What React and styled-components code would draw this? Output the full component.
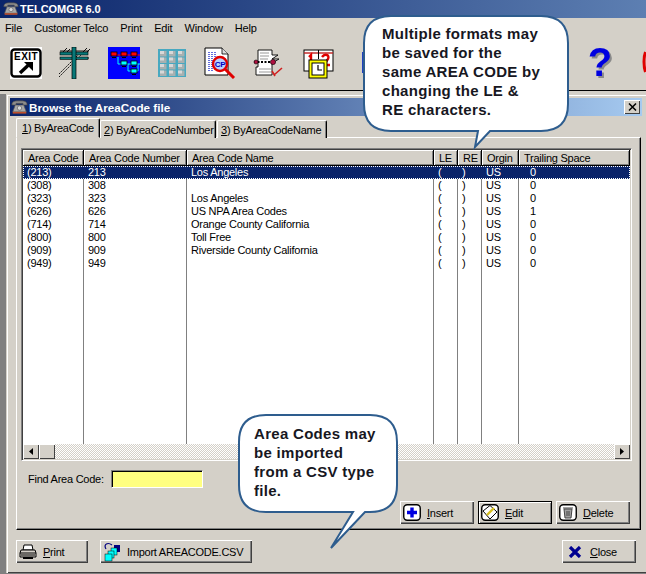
import React from 'react';
import styled, { createGlobalStyle } from 'styled-components';

const GlobalStyle = createGlobalStyle`
  html, body {
    margin: 0;
    padding: 0;
    background: #808080;
  }
`;

const FACE = '#d4d0c8';
const NAVY = '#0a246a';
const COLUMNS = '61px 103px 247px 24px 24px 37px 1fr';

const Screen = styled.div`
  position: relative;
  width: 646px;
  height: 574px;
  overflow: hidden;
  display: flex;
  flex-direction: column;
  background: ${FACE};
  font-family: 'Liberation Sans', Arial, sans-serif;
  font-size: 11px;
  letter-spacing: -0.25px;
  color: #000;
`;

const AppTitle = styled.div`
  height: 18px;
  display: flex;
  align-items: center;
  gap: 1px;
  padding-left: 3px;
  background: linear-gradient(90deg, ${NAVY}, #5d7fb2);
  color: #fff;
  font-weight: bold;
  font-size: 11px;
  letter-spacing: -0.05px;
`;

const MenuBar = styled.div`
  height: 20px;
  display: flex;
  align-items: center;
  gap: 12px;
  padding-left: 5px;
  letter-spacing: -0.15px;
`;

const Toolbar = styled.div`
  height: 53px;
  display: flex;
  align-items: flex-start;
  padding: 9px 0 0 10px;
  box-sizing: border-box;
  border-bottom: 1px solid #000;
  overflow: hidden;
`;

const ToolIcon = styled.svg`
  flex: none;
  width: 32px;
  height: 32px;
  margin-right: ${({ $gap }) => $gap}px;
`;

const HelpMark = styled.text`
  font-family: 'Liberation Sans', Arial, sans-serif;
  font-weight: bold;
  font-size: 40px;
  letter-spacing: 0;
  fill: #0000e0;
  filter: drop-shadow(2px 2px 0 #8a8a8a);
`;

const MdiArea = styled.div`
  flex: 1;
  margin-top: 3px;
  padding: 0 0 1px 6px;
  display: flex;
  background: #808080;
`;

const Window = styled.div`
  flex: 1;
  padding: 4px 4px 0;
  display: flex;
  flex-direction: column;
  background: ${FACE};
  box-shadow: inset 1px 1px ${FACE}, inset 2px 2px #fff, inset 0 -1px #404040;
`;

const WindowTitle = styled.div`
  height: 18px;
  flex: none;
  display: flex;
  align-items: center;
  gap: 1px;
  padding: 0 2px 0 1px;
  background: linear-gradient(90deg, ${NAVY}, #a6caf0);
  color: #fff;
  font-weight: bold;
  font-size: 11.7px;
  letter-spacing: 0;
`;

const CloseBox = styled.button`
  margin-left: auto;
  width: 16px;
  height: 14px;
  padding: 0;
  border: 0;
  display: flex;
  align-items: center;
  justify-content: center;
  background: ${FACE};
  box-shadow: inset 1px 1px #fff, inset -1px -1px #404040;
`;

const Content = styled.div`
  flex: 1;
  display: flex;
  flex-direction: column;
  padding: 2px 1px 0 6px;
`;

const TabRow = styled.div`
  height: 20px;
  display: flex;
  align-items: flex-end;
  position: relative;
  z-index: 1;
  margin-bottom: -1px;
`;

const Tab = styled.div`
  box-sizing: border-box;
  width: ${({ $width }) => $width}px;
  height: ${({ $active }) => ($active ? 20 : 18)}px;
  margin-right: ${({ $active }) => ($active ? 0 : 1)}px;
  padding: ${({ $active }) => ($active ? '3px 0 0 5px' : '3px 0 0 3px')};
  background: ${FACE};
  border: 1px solid #fff;
  border-right-color: #000;
  border-bottom: ${({ $active }) => ($active ? `1px solid ${FACE}` : '0')};
  border-radius: 2px 2px 0 0;
  box-shadow: inset -1px 0 #808080;
  white-space: nowrap;
`;

const TabPanel = styled.div`
  box-sizing: border-box;
  height: 393px;
  padding: 10px 8px 0 4px;
  display: flex;
  flex-direction: column;
  border: 1px solid #fff;
  border-right-color: #000;
  border-bottom-color: #000;
  box-shadow: inset -1px -1px #808080;
`;

const GridFrame = styled.div`
  box-sizing: border-box;
  height: 313px;
  padding: 1px;
  display: flex;
  flex-direction: column;
  border: 1px solid;
  border-color: #808080 #fff #fff #808080;
  box-shadow: inset 1px 1px #404040, inset -1px -1px ${FACE};
`;

const HeaderRow = styled.div`
  display: grid;
  grid-template-columns: ${COLUMNS};
  height: 16px;
  flex: none;
`;

const HeaderCell = styled.div`
  box-sizing: border-box;
  padding: 2px 0 0 5px;
  background: ${FACE};
  border-right: 1px solid #000;
  border-bottom: 1px solid #000;
  box-shadow: inset 1px 1px #fff, inset -1px -1px #808080;
  white-space: nowrap;
`;

const GridBody = styled.div`
  flex: 1;
  min-height: 0;
  background-color: #fff;
  background-image: linear-gradient(#808080, #808080), linear-gradient(#808080, #808080),
    linear-gradient(#808080, #808080), linear-gradient(#808080, #808080),
    linear-gradient(#808080, #808080), linear-gradient(#808080, #808080);
  background-size: 1px 100%;
  background-repeat: no-repeat;
  background-position: 60px 0, 163px 0, 410px 0, 434px 0, 458px 0, 495px 0;
`;

const Row = styled.div`
  display: grid;
  grid-template-columns: ${COLUMNS};
  height: 13px;
  line-height: 13px;
  background: ${({ $selected }) => ($selected ? NAVY : 'transparent')};
  color: ${({ $selected }) => ($selected ? '#fff' : '#000')};
  outline: ${({ $selected }) => ($selected ? '1px dotted #fff' : 'none')};
  outline-offset: -1px;
`;

const Cell = styled.div`
  padding-left: ${({ $indent }) => $indent || 4}px;
  white-space: nowrap;
  overflow: hidden;
`;

const ScrollBar = styled.div`
  height: 15px;
  flex: none;
  display: flex;
  background: repeating-conic-gradient(#fff 0 25%, ${FACE} 0 50%) 0 0 / 2px 2px;
`;

const ScrollButton = styled.div`
  width: 16px;
  height: 15px;
  flex: none;
  display: flex;
  align-items: center;
  justify-content: center;
  margin-left: ${({ $end }) => ($end ? 'auto' : '0')};
  background: ${FACE};
  box-shadow: inset 1px 1px #fff, inset -1px -1px #404040;
`;

const FindRow = styled.div`
  display: flex;
  align-items: center;
  height: 18px;
  margin-top: 9px;
  padding-left: 7px;
`;

const FindLabel = styled.label`
  width: 83px;
`;

const FindInput = styled.div`
  box-sizing: border-box;
  width: 92px;
  height: 18px;
  background: #ffff80;
  border: 1px solid;
  border-color: #808080 #fff #fff #808080;
  box-shadow: inset 1px 1px #000;
`;

const PanelActions = styled.div`
  display: flex;
  justify-content: flex-end;
  gap: 4px;
  margin: 13px 2px 0 0;
`;

const Button = styled.button`
  box-sizing: border-box;
  width: ${({ $width }) => $width}px;
  height: 23px;
  flex: none;
  display: flex;
  align-items: center;
  gap: ${({ $gap }) => $gap || 6}px;
  padding: 0 0 0 3px;
  border: 0;
  background: ${FACE};
  font: inherit;
  letter-spacing: inherit;
  color: #000;
  box-shadow: ${({ $default }) =>
    $default
      ? 'inset 0 0 0 1px #000, inset 2px 2px #fff, inset -2px -2px #808080'
      : 'inset 1px 1px #fff, inset -1px -1px #404040, inset -2px -2px #808080'};
`;

const CloseGlyph = styled.svg`
  margin-left: 3px;
`;

const WindowActions = styled.div`
  display: flex;
  margin: 10px 5px 0 0;
  gap: 12px;
`;

const CloseSlot = styled.div`
  margin-left: auto;
`;

const Callout = styled.div`
  position: absolute;
  left: ${({ $left }) => $left}px;
  top: ${({ $top }) => $top}px;
  width: ${({ $width }) => $width}px;
  height: ${({ $height }) => $height}px;
  box-sizing: border-box;
  padding: ${({ $padTop }) => $padTop}px 0 0 ${({ $pad }) => $pad}px;
  font-size: 15px;
  font-weight: bold;
  line-height: 19px;
  letter-spacing: 0.3px;
  color: #17171f;
  z-index: 2;
`;

const CalloutShape = styled.svg`
  position: absolute;
  left: 0;
  top: 0;
  z-index: -1;
`;

const Phone = ({ size = 16 }) => (
  <svg width={size} height={size * 0.85} viewBox="0 0 20 17">
    <path d="M1 6 C1 1 5 1 10 1 C15 1 19 1 19 6 L14 6 L14 4 L6 4 L6 6 Z" fill="#8c8c8c" stroke="#444" strokeWidth="0.8" />
    <path d="M5 6 L15 6 L18 14 L2 14 Z" fill="#a8a8a8" stroke="#555" strokeWidth="0.8" />
    <circle cx="10" cy="9.5" r="2.6" fill="#d8d8d8" stroke="#555" strokeWidth="0.7" />
    <rect x="2" y="14" width="16" height="2" fill="#c0502a" />
  </svg>
);

const ExitIcon = () => (
  <ToolIcon $gap={17} viewBox="0 0 32 32">
    <rect width="32" height="32" fill="#fff" />
    <rect x="1.5" y="2.5" width="29" height="27" rx="3" fill="#fff" stroke="#000" strokeWidth="2.4" />
    <text x="16" y="13" textAnchor="middle" fontFamily="Liberation Sans" fontWeight="bold" fontSize="10" letterSpacing="0.4">EXIT</text>
    <path d="M10 26 L19 17.5" stroke="#000" strokeWidth="3.4" />
    <path d="M14 15 L23 15 L23 24 Z" fill="#000" />
  </ToolIcon>
);

const PoleIcon = () => (
  <ToolIcon $gap={17} viewBox="0 0 32 32">
    <g stroke="#000" strokeWidth="0.9" fill="none">
      <path d="M0 30 L22 8 M0 27 L20 7" strokeDasharray="2 1" />
      <path d="M3 6 L8 1 M7 6 L11 2 M23 6 L28 1 M27 6 L31 2" />
      <path d="M1 4 L30 4 M1 11 L30 11" />
    </g>
    <rect x="1" y="5" width="28" height="3" fill="#087878" stroke="#000" strokeWidth="0.6" />
    <rect x="1" y="10" width="28" height="2.4" fill="#087878" stroke="#000" strokeWidth="0.6" />
    <rect x="13" y="0" width="4" height="32" fill="#087878" stroke="#000" strokeWidth="0.7" />
  </ToolIcon>
);

const OrgBox = ({ x, y, c }) => (
  <g>
    <rect x={x} y={y} width="6" height="4" fill={c === 'r' ? '#ff0000' : '#00ffff'} stroke="#000" strokeWidth="0.8" />
    <rect x={x + 1} y={y + 5} width="4" height="1" fill="#000" />
  </g>
);

const OrgIcon = () => (
  <ToolIcon $gap={16} viewBox="0 0 32 32">
    <rect width="32" height="32" fill="#0000ff" />
    <path d="M3 8 L32 8" stroke="#ff0000" />
    <path d="M10 10 L10 17 L32 17 M30 17 L30 24 L26 24 M20 17 L20 24 L26 24" stroke="#00ffff" fill="none" />
    <OrgBox x={3} y={5} c="r" />
    <OrgBox x={13} y={5} c="r" />
    <OrgBox x={23} y={5} c="r" />
    <OrgBox x={13} y={14} c="c" />
    <OrgBox x={23} y={14} c="c" />
    <OrgBox x={23} y={22} c="c" />
  </ToolIcon>
);

const KeyGridIcon = () => (
  <ToolIcon $gap={16} viewBox="0 0 28 32">
    <rect y="2" width="28" height="28" fill="#48a8c0" />
    {[0, 1, 2, 3].map((r) =>
      [0, 1, 2].map((c) => (
        <g key={`${r}-${c}`}>
          <rect x={2 + c * 9} y={4 + r * 6.5} width="6.5" height="5.5" fill="#a8b0b0" />
          <rect x={2 + c * 9} y={4 + r * 6.5} width="4" height="3" fill="#d8d8d8" />
        </g>
      ))
    )}
  </ToolIcon>
);

const SearchDocIcon = () => (
  <ToolIcon $gap={17} viewBox="0 0 32 32">
    <path d="M1 1 L18 1 L24 7 L24 28 L1 28 Z" fill="#fff" stroke="#000" strokeWidth="1" />
    <path d="M18 1 L18 7 L24 7" fill="#ddd" stroke="#000" strokeWidth="0.8" />
    <path d="M5 5 L5 24 M8 5 L8 24 M11 5 L11 11" stroke="#2030d0" strokeWidth="1.4" strokeDasharray="1 1" />
    <circle cx="16" cy="17" r="7" fill="#b8d0ff" stroke="#e00000" strokeWidth="2.4" />
    <text x="16" y="20" textAnchor="middle" fontFamily="Liberation Sans" fontWeight="bold" fontSize="8" fill="#0000c0">CP</text>
    <path d="M21 22 L30 31" stroke="#e00000" strokeWidth="3" />
  </ToolIcon>
);

const NotebookIcon = () => (
  <ToolIcon $gap={18} viewBox="0 0 32 32">
    <path d="M5 3 L19 3 L19 8 L25 8 L19 12 L26 12 L19 16 L19 28 L3 28 L3 20 L5 20 Z" fill="#fff" stroke="#000" strokeWidth="0.9" />
    <path d="M7 6 H16 M7 9 H16 M7 12 H15 M6 22 H18 M6 25 H18" stroke="#999" />
    <path d="M1 15 H22" stroke="#000" strokeWidth="2" strokeDasharray="2 1.5" />
    <circle cx="3" cy="15" r="2" fill="#b01040" stroke="#000" strokeWidth="0.6" />
    <circle cx="20" cy="15" r="2.6" fill="#b01040" stroke="#000" strokeWidth="0.6" />
    <path d="M21 28 L29 21 M19 24 L22 29" stroke="#d02020" strokeWidth="1.6" />
  </ToolIcon>
);

const CalendarIcon = () => (
  <ToolIcon $gap={27} viewBox="0 0 32 32">
    <rect x="1" y="3" width="29" height="21" fill="#fff" stroke="#000" strokeWidth="1" />
    <path d="M1 6 H30" stroke="#c02020" strokeWidth="1.4" />
    <path d="M15.5 3 V12" stroke="#000" />
    <path d="M6 10 L8 8 V18 M19 10 C22 6 27 8 25 12 L21 18 H27" stroke="#e00000" strokeWidth="2.4" fill="none" />
    <rect x="6" y="13" width="18" height="18" fill="#ffff00" stroke="#000" strokeWidth="1" />
    <rect x="9" y="16" width="12" height="12" fill="#fff" stroke="#000" strokeWidth="1" />
    <path d="M15 18 V23 H19" stroke="#000" strokeWidth="1.2" fill="none" />
  </ToolIcon>
);

const HiddenIcon = () => (
  <ToolIcon $gap={191} viewBox="0 0 32 32">
    <rect x="0.5" y="5.5" width="3" height="20" fill="#fff" stroke="#2040c0" strokeWidth="1" />
  </ToolIcon>
);

const HelpIcon = () => (
  <ToolIcon $gap={25} viewBox="0 0 32 32">
    <HelpMark x="15" y="29" textAnchor="middle">?</HelpMark>
  </ToolIcon>
);

const RedIcon = () => (
  <ToolIcon $gap={0} viewBox="0 0 32 32">
    <path d="M3.5 5 C1.5 10 1.5 19 3.5 25" stroke="#e00000" strokeWidth="3" fill="none" />
  </ToolIcon>
);

const PrintGlyph = () => (
  <svg width="18" height="16" viewBox="0 0 18 16">
    <path d="M5 1 L13 1 L14 6 L4 6 Z" fill="#fff" stroke="#000" />
    <path d="M2 6 L16 6 L17 9 L17 13 L1 13 L1 9 Z" fill="#d4d0c8" stroke="#000" />
    <path d="M1 9 H17 M2 11 H16" stroke="#000" />
    <rect x="4" y="13" width="10" height="2" fill="#000" />
  </svg>
);

const ImportGlyph = () => (
  <svg width="18" height="20" viewBox="0 0 18 20">
    <path d="M3 7 C0 2 5 0 9 3" stroke="#000080" fill="none" strokeWidth="1.2" />
    <rect x="11" y="3" width="6" height="7" fill="#000080" />
    <rect x="8" y="6" width="6" height="7" fill="#00ffff" stroke="#000" strokeWidth="0.5" />
    <rect x="5" y="9" width="6" height="7" fill="#00ffff" stroke="#000" strokeWidth="0.5" />
    <rect x="2" y="12" width="7" height="7" fill="#00ffff" stroke="#000" strokeWidth="0.5" />
  </svg>
);

const RoundBox = ({ children }) => (
  <svg width="18" height="17" viewBox="0 0 18 17">
    <rect x="0.75" y="0.75" width="16.5" height="15.5" rx="3.5" fill="#fff" stroke="#000" strokeWidth="1.4" />
    {children}
  </svg>
);

const ScrollArrow = ({ flip }) => (
  <svg width="5" height="7" viewBox="0 0 5 7">
    <path d={flip ? 'M0 0 L4 3.5 L0 7 Z' : 'M4 0 L0 3.5 L4 7 Z'} fill="#000" />
  </svg>
);

const CalloutBubble = ({ w, h, tail, bodyW, bodyH }) => {
  const r = 27;
  const [a, tip, b] = tail;
  return (
    <CalloutShape width={w} height={h} viewBox={`0 0 ${w} ${h}`}>
      <path
        d={`M${2 + r} 2 H${bodyW - r} Q${bodyW} 2 ${bodyW} ${2 + r} V${bodyH - r} Q${bodyW} ${bodyH} ${bodyW - r} ${bodyH}
            H${b} L${tip[0]} ${tip[1]} L${a} ${bodyH} H${2 + r} Q2 ${bodyH} 2 ${bodyH - r} V${2 + r} Q2 2 ${2 + r} 2 Z`}
        fill="#fff"
        stroke="#2e5d8e"
        strokeWidth="2"
      />
    </CalloutShape>
  );
};

const headers = ['Area Code', 'Area Code Number', 'Area Code Name', 'LE', 'RE', 'Orgin', 'Trailing Space'];

const rows = [
  ['213', 'Los Angeles', '0'],
  ['308', '', '0'],
  ['323', 'Los Angeles', '0'],
  ['626', 'US NPA Area Codes', '1'],
  ['714', 'Orange County California', '0'],
  ['800', 'Toll Free', '0'],
  ['909', 'Riverside County California', '0'],
  ['949', '', '0'],
];

export default function App() {
  return (
    <Screen>
      <GlobalStyle />
      <AppTitle>
        <Phone />
        TELCOMGR 6.0
      </AppTitle>
      <MenuBar>
        <span>File</span>
        <span>Customer Telco</span>
        <span>Print</span>
        <span>Edit</span>
        <span>Window</span>
        <span>Help</span>
      </MenuBar>
      <Toolbar>
        <ExitIcon />
        <PoleIcon />
        <OrgIcon />
        <KeyGridIcon />
        <SearchDocIcon />
        <NotebookIcon />
        <CalendarIcon />
        <HiddenIcon />
        <HelpIcon />
        <RedIcon />
      </Toolbar>
      <MdiArea>
        <Window>
          <WindowTitle>
            <Phone size={17} />
            Browse the AreaCode file
            <CloseBox aria-label="Close window">
              <svg width="9" height="8" viewBox="0 0 9 8">
                <path d="M1 0.5 L8 7.5 M8 0.5 L1 7.5" stroke="#000" strokeWidth="1.5" />
              </svg>
            </CloseBox>
          </WindowTitle>
          <Content>
            <TabRow>
              <Tab $active $width={84}><u>1</u>) ByAreaCode</Tab>
              <Tab $width={116}><u>2</u>) ByAreaCodeNumber</Tab>
              <Tab $width={110}><u>3</u>) ByAreaCodeName</Tab>
            </TabRow>
            <TabPanel>
              <GridFrame>
                <HeaderRow>
                  {headers.map((h) => (
                    <HeaderCell key={h}>{h}</HeaderCell>
                  ))}
                </HeaderRow>
                <GridBody>
                  {rows.map(([code, name, space], i) => (
                    <Row key={code} $selected={i === 0}>
                      <Cell>({code})</Cell>
                      <Cell>{code}</Cell>
                      <Cell>{name}</Cell>
                      <Cell>(</Cell>
                      <Cell>)</Cell>
                      <Cell>US</Cell>
                      <Cell $indent={11}>{space}</Cell>
                    </Row>
                  ))}
                </GridBody>
                <ScrollBar>
                  <ScrollButton><ScrollArrow /></ScrollButton>
                  <ScrollButton />
                  <ScrollButton $end><ScrollArrow flip /></ScrollButton>
                </ScrollBar>
              </GridFrame>
              <FindRow>
                <FindLabel>Find Area Code:</FindLabel>
                <FindInput />
              </FindRow>
              <PanelActions>
                <Button $width={74}>
                  <RoundBox>
                    <path d="M9 3.5 V13.5 M4 8.5 H14" stroke="#0000e0" strokeWidth="3.4" />
                  </RoundBox>
                  <span><u>I</u>nsert</span>
                </Button>
                <Button $width={74} $default>
                  <RoundBox>
                    <path d="M2 7 L9 1.5 L16 8 L9 15 Z" fill="#fff" stroke="#000" />
                    <path d="M6 11 L13 4" stroke="#d8c020" strokeWidth="2.4" />
                  </RoundBox>
                  <span><u>E</u>dit</span>
                </Button>
                <Button $width={74}>
                  <RoundBox>
                    <path d="M5 5 H13 L12 14 H6 Z" fill="#a0a0a0" stroke="#444" />
                    <path d="M4 4 H14 M8 7 V12 M10 7 V12" stroke="#444" />
                  </RoundBox>
                  <span><u>D</u>elete</span>
                </Button>
              </PanelActions>
            </TabPanel>
            <WindowActions>
              <Button $width={72}>
                <PrintGlyph />
                <span><u>P</u>rint</span>
              </Button>
              <Button $width={152}>
                <ImportGlyph />
                <span>Import AREACODE.CSV</span>
              </Button>
              <CloseSlot>
                <Button $width={74} $gap={8}>
                  <CloseGlyph width="14" height="12" viewBox="0 0 14 12">
                    <path d="M2 1 L12 11 M12 1 L2 11" stroke="#000090" strokeWidth="3.2" />
                  </CloseGlyph>
                  <span><u>C</u>lose</span>
                </Button>
              </CloseSlot>
            </WindowActions>
          </Content>
        </Window>
      </MdiArea>

      <Callout $left={362} $top={14} $width={208} $height={136} $pad={20} $padTop={10}>
        <CalloutBubble w={208} h={136} bodyW={206} bodyH={117} tail={[116, [113, 133], 128]} />
        Multiple formats may<br />be saved for the<br />same AREA CODE by<br />changing the LE &amp;<br />RE characters.
      </Callout>
      <Callout $left={237} $top={413} $width={162} $height={137} $pad={17} $padTop={11}>
        <CalloutBubble w={162} h={137} bodyW={160} bodyH={99} tail={[116, [94, 135], 128]} />
        Area Codes may<br />be imported<br />from a CSV type<br />file.
      </Callout>
    </Screen>
  );
}
